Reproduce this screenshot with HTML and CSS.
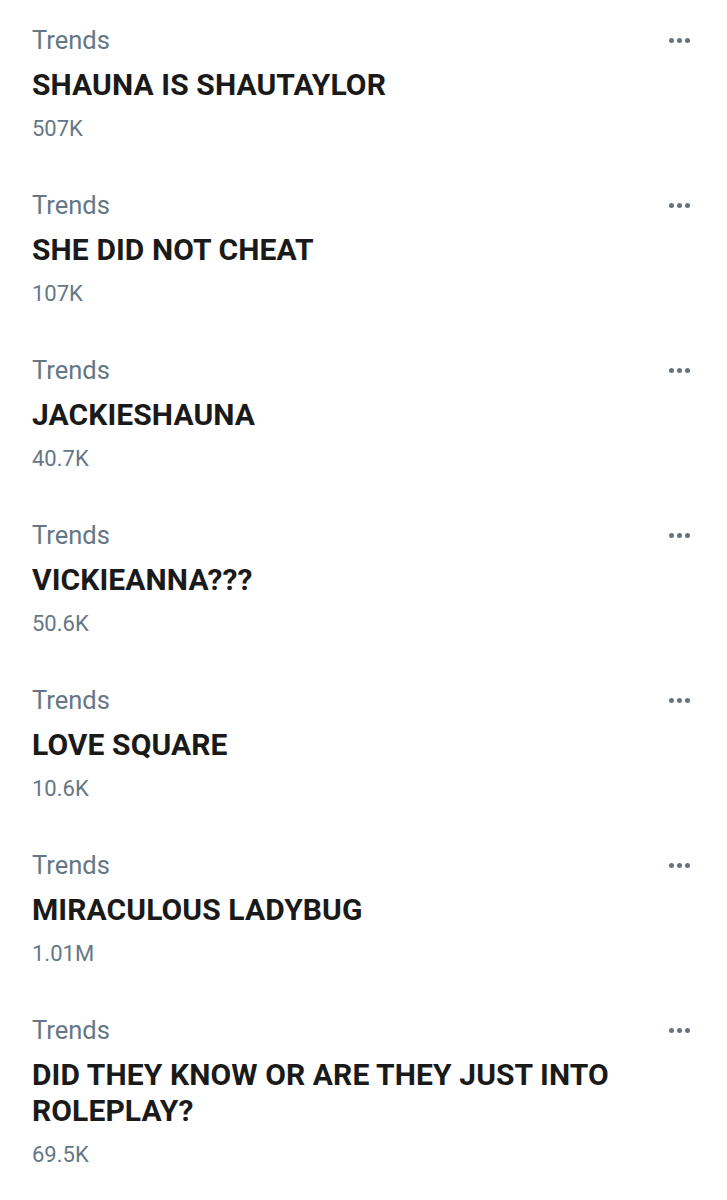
FILE: index.html
```html
<!DOCTYPE html>
<html>
<head>
<meta charset="utf-8">
<link rel="stylesheet" href="styles.css">
</head>
<body>
<div class="list">
  <div class="trend">
    <div class="meta"><span class="label">Trends</span><span class="more"><i></i><i></i><i></i></span></div>
    <div class="title">SHAUNA IS SHAUTAYLOR</div>
    <div class="count">507K</div>
  </div>
  <div class="trend">
    <div class="meta"><span class="label">Trends</span><span class="more"><i></i><i></i><i></i></span></div>
    <div class="title">SHE DID NOT CHEAT</div>
    <div class="count">107K</div>
  </div>
  <div class="trend">
    <div class="meta"><span class="label">Trends</span><span class="more"><i></i><i></i><i></i></span></div>
    <div class="title">JACKIESHAUNA</div>
    <div class="count">40.7K</div>
  </div>
  <div class="trend">
    <div class="meta"><span class="label">Trends</span><span class="more"><i></i><i></i><i></i></span></div>
    <div class="title">VICKIEANNA???</div>
    <div class="count">50.6K</div>
  </div>
  <div class="trend">
    <div class="meta"><span class="label">Trends</span><span class="more"><i></i><i></i><i></i></span></div>
    <div class="title">LOVE SQUARE</div>
    <div class="count">10.6K</div>
  </div>
  <div class="trend">
    <div class="meta"><span class="label">Trends</span><span class="more"><i></i><i></i><i></i></span></div>
    <div class="title">MIRACULOUS LADYBUG</div>
    <div class="count">1.01M</div>
  </div>
  <div class="trend last">
    <div class="meta"><span class="label">Trends</span><span class="more"><i></i><i></i><i></i></span></div>
    <div class="title">DID THEY KNOW OR ARE THEY JUST INTO ROLEPLAY?</div>
    <div class="count">69.5K</div>
  </div>
</div>
</body>
</html>
```
FILE: styles.css
```css
html, body {
  margin: 0;
  padding: 0;
  background: #ffffff;
}
body {
  font-family: Roboto, "Liberation Sans", sans-serif;
  width: 727px;
}
.list {
  display: flex;
  flex-direction: column;
  padding-top: 24px;
}
.trend {
  display: flex;
  flex-direction: column;
  height: 165px;
  padding: 0 37px 0 32px;
  box-sizing: border-box;
}
.meta {
  display: flex;
  justify-content: space-between;
  align-items: center;
  height: 32px;
}
.label {
  font-size: 25.5px;
  color: #657786;
  line-height: 32px;
}
.more {
  display: flex;
  gap: 3px;
  align-items: center;
}
.more i {
  display: block;
  width: 5px;
  height: 5px;
  border-radius: 50%;
  background: #66737f;
}
.title {
  font-size: 30px;
  font-weight: 700;
  color: #1a1a1a;
  line-height: 36px;
  margin-top: 11px;
  letter-spacing: 0.1px;
}
.count {
  font-size: 22px;
  color: #657786;
  line-height: 30px;
  margin-top: 11px;
}
.last .title {
  max-width: 620px;
}
```
